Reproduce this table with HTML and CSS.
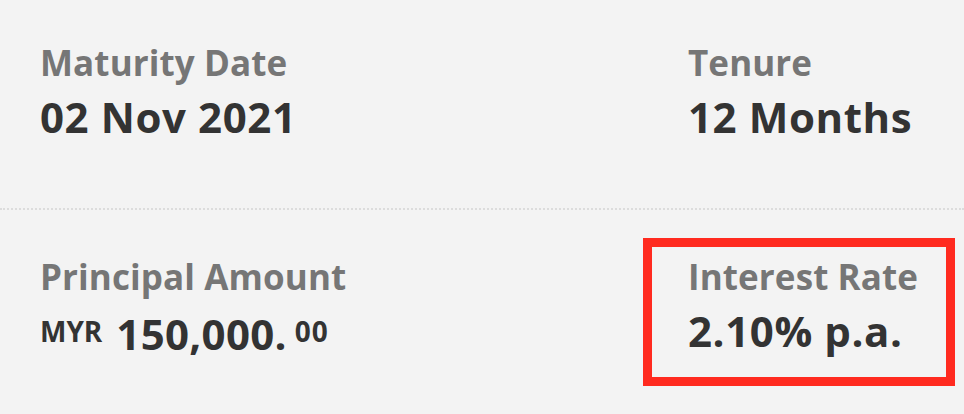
FILE: index.html
```html
<!DOCTYPE html>
<html>
<head>
<meta charset="utf-8">
<link rel="stylesheet" href="styles.css">
</head>
<body>
<div class="details">
  <div class="row row-top">
    <div class="cell">
      <div class="label">Maturity Date</div>
      <div class="value">02 Nov 2021</div>
    </div>
    <div class="cell">
      <div class="label">Tenure</div>
      <div class="value">12 Months</div>
    </div>
  </div>
  <div class="divider"></div>
  <div class="row row-bottom">
    <div class="cell">
      <div class="label">Principal Amount</div>
      <div class="value amount"><span class="cur">MYR</span><span class="int">150,000.</span><span class="dec">00</span></div>
    </div>
    <div class="cell highlighted">
      <div class="label">Interest Rate</div>
      <div class="value">2.10% p.a.</div>
    </div>
  </div>
</div>
</body>
</html>
```

FILE: styles.css
```css
html, body {
  margin: 0;
  padding: 0;
  background: #f3f3f3;
}
body {
  width: 964px;
  height: 414px;
  overflow: hidden;
  font-family: "Open Sans", "Noto Sans", sans-serif;
}
.row {
  display: grid;
  grid-template-columns: 648px 1fr;
  padding-left: 40px;
}
.row-top {
  padding-top: 42px;
  height: 208px;
  box-sizing: border-box;
}
.divider {
  border-top: 2px dotted #dcdcdc;
}
.row-bottom {
  padding-top: 46px;
}
.cell {
  position: relative;
}
.label {
  font-size: 35px;
  line-height: 42px;
  font-weight: 700;
  color: #767676;
  letter-spacing: 0.1px;
}
.value {
  font-size: 42px;
  line-height: 50px;
  font-weight: 700;
  color: #333333;
  margin-top: 8px;
  letter-spacing: 0.6px;
  white-space: nowrap;
}
.cur {
  font-size: 28px;
  vertical-align: 8px;
  margin-right: 14px;
  letter-spacing: 0;
}
.int {
  letter-spacing: 0.3px;
}
.dec {
  font-size: 28px;
  vertical-align: 8px;
  margin-left: 8px;
  letter-spacing: 1px;
}
.highlighted::after {
  content: "";
  position: absolute;
  left: -45px;
  top: -18px;
  width: 312px;
  height: 148px;
  box-sizing: border-box;
  border: 9px solid #ff2a1f;
}
```
